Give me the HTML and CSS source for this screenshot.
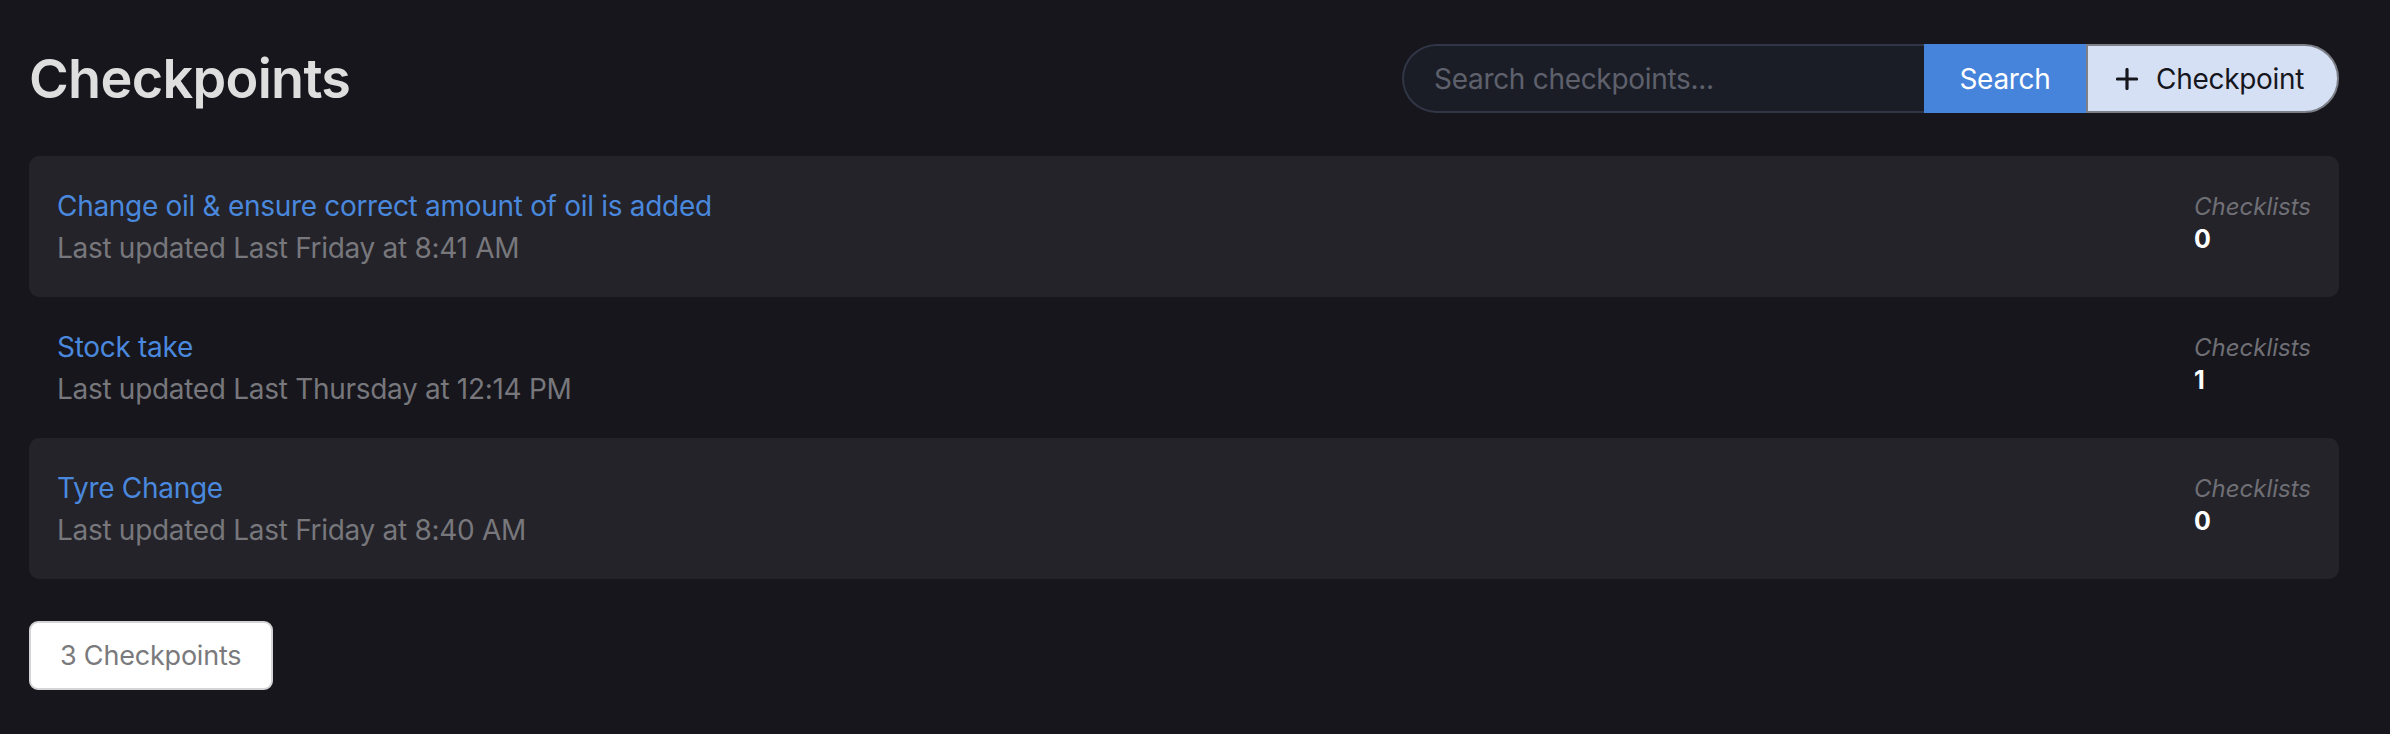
FILE: index.html
```html
<!DOCTYPE html>
<html lang="en">
<head>
<meta charset="utf-8">
<title>Checkpoints</title>
<link rel="stylesheet" href="styles.css">
</head>
<body>
<div class="page">
  <header class="header">
    <h1 class="title">Checkpoints</h1>
    <form class="search">
      <input class="search-input" type="text" placeholder="Search checkpoints...">
      <button class="search-btn" type="button">Search</button>
      <button class="add-btn" type="button">
        <svg class="plus" width="22" height="22" viewBox="0 0 22 22"><path d="M11 1.5V20.5M1.5 11H20.5" stroke="#16171d" stroke-width="3.2" stroke-linecap="round"/></svg>
        <span>Checkpoint</span>
      </button>
    </form>
  </header>

  <ul class="list">
    <li class="row">
      <div class="info">
        <a class="name" href="#">Change oil &amp; ensure correct amount of oil is added</a>
        <div class="meta">Last updated Last Friday at 8:41 AM</div>
      </div>
      <div class="stat">
        <div class="stat-label">Checklists</div>
        <div class="stat-value">0</div>
      </div>
    </li>
    <li class="row">
      <div class="info">
        <a class="name" href="#">Stock take</a>
        <div class="meta">Last updated Last Thursday at 12:14 PM</div>
      </div>
      <div class="stat">
        <div class="stat-label">Checklists</div>
        <div class="stat-value">1</div>
      </div>
    </li>
    <li class="row">
      <div class="info">
        <a class="name" href="#">Tyre Change</a>
        <div class="meta">Last updated Last Friday at 8:40 AM</div>
      </div>
      <div class="stat">
        <div class="stat-label">Checklists</div>
        <div class="stat-value">0</div>
      </div>
    </li>
  </ul>

  <div class="count">3 Checkpoints</div>
</div>
</body>
</html>
```

FILE: styles.css
```css
* { box-sizing: border-box; }

html, body {
  margin: 0;
  padding: 0;
  background: #16161c;
}

body {
  font-family: Inter, "Noto Sans", sans-serif;
  font-size: 28px;
  line-height: 42px;
  letter-spacing: -0.3px;
  color: #dedede;
}

.page {
  padding: 44px 51px 40px 29px;
}

.header {
  display: flex;
  align-items: center;
  justify-content: space-between;
  height: 69px;
}

.title {
  margin: 0;
  font-size: 54px;
  line-height: 1;
  font-weight: 600;
  color: #dedede;
  letter-spacing: -0.7px;
}

.search {
  display: flex;
  height: 69px;
  margin: 0;
}

.search-input {
  width: 522px;
  height: 69px;
  margin: 0;
  padding: 0 0 0 30px;
  background: #1b1d26;
  border: 2px solid #313646;
  border-right: none;
  border-radius: 35px 0 0 35px;
  font-family: inherit;
  font-size: 28px;
  letter-spacing: -0.3px;
  color: #dedede;
  outline: none;
}

.search-input::placeholder {
  color: #5e616c;
}

.search-btn {
  width: 162px;
  height: 69px;
  margin: 0;
  padding: 0;
  border: none;
  background: #4683db;
  color: #ffffff;
  font-family: inherit;
  font-size: 28px;
  letter-spacing: -0.3px;
}

.add-btn {
  display: flex;
  align-items: center;
  gap: 18px;
  width: 253px;
  height: 69px;
  margin: 0;
  padding: 0 0 0 28px;
  background: #d6e0f5;
  border: 2px solid #7c7f87;
  border-radius: 0 35px 35px 0;
  color: #16171d;
  font-family: inherit;
  font-size: 28px;
  letter-spacing: -0.3px;
}

.plus { flex: none; }

.list {
  list-style: none;
  margin: 43px 0 0;
  padding: 0;
}

.row {
  display: flex;
  justify-content: space-between;
  padding: 28px;
  border-radius: 10px;
}

.row:nth-child(odd) {
  background: #232329;
}

.info {
  display: flex;
  flex-direction: column;
  padding-top: 1px;
}

.name {
  color: #4a88de;
  text-decoration: none;
}

.meta {
  color: #77777c;
}

.stat {
  display: flex;
  flex-direction: column;
  padding-top: 5px;
}

.stat-label {
  font-size: 24px;
  line-height: 36px;
  font-style: italic;
  color: #6f6f75;
  letter-spacing: 0;
}

.stat-value {
  font-size: 25px;
  line-height: 28px;
  font-weight: 700;
  color: #ffffff;
}

.count {
  display: inline-block;
  margin-top: 42px;
  width: 244px;
  height: 69px;
  padding-left: 29px;
  background: #ffffff;
  border: 2px solid #d4d4d6;
  border-radius: 9px;
  font-size: 27px;
  line-height: 65px;
  letter-spacing: -0.2px;
  color: #7a7a7c;
}
```
